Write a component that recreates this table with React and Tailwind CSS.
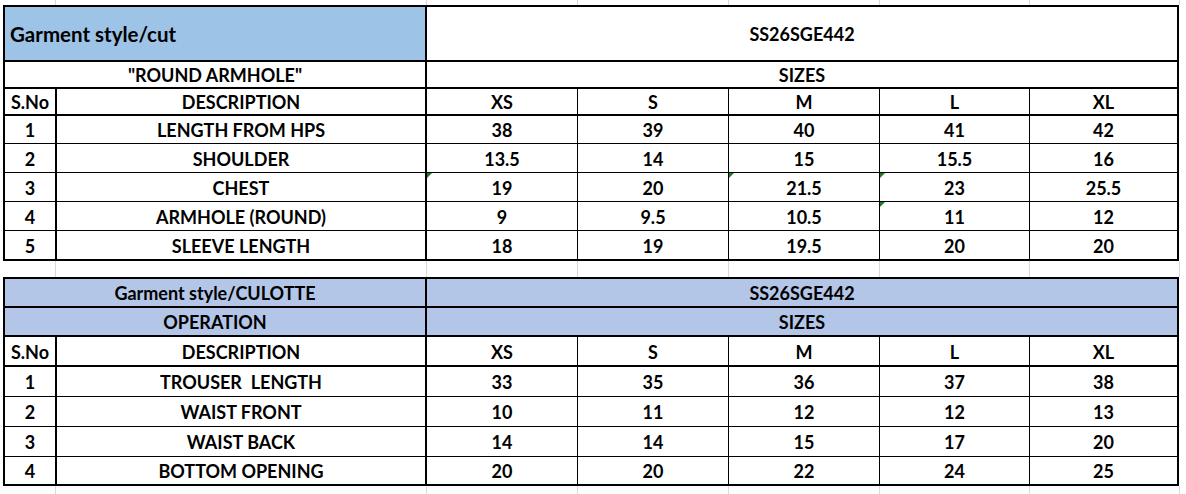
import React from 'react'

const widths = ['w-[52px]', 'w-[370px]', 'w-[152px]', 'w-[151px]', 'w-[151px]', 'w-[150px]', 'w-[150px]']

const sizes = ['XS', 'S', 'M', 'L', 'XL']

const bodice = [
  ['1', 'LENGTH FROM HPS', ['38', '39', '40', '41', '42']],
  ['2', 'SHOULDER', ['13.5', '14', '15', '15.5', '16']],
  ['3', 'CHEST', ['19', '20', '21.5', '23', '25.5'], [0, 2, 3]],
  ['4', 'ARMHOLE (ROUND)', ['9', '9.5', '10.5', '11', '12'], [3]],
  ['5', 'SLEEVE LENGTH', ['18', '19', '19.5', '20', '20']],
]

const culotte = [
  ['1', 'TROUSER  LENGTH', ['33', '35', '36', '37', '38']],
  ['2', 'WAIST FRONT', ['10', '11', '12', '12', '13']],
  ['3', 'WAIST BACK', ['14', '14', '15', '17', '20']],
  ['4', 'BOTTOM OPENING', ['20', '20', '22', '24', '25']],
]

function Flag() {
  return (
    <span className="absolute left-0 top-0 w-0 h-0 border-t-[5px] border-r-[5px] border-t-[#1e7b1e] border-r-transparent" />
  )
}

function Cell({ w, className = '', children, flag }) {
  return (
    <div className={`relative flex items-center justify-center pt-[2px] border-black ${w} ${className}`}>
      {flag && <Flag />}
      <span className="whitespace-pre">{children}</span>
    </div>
  )
}

// data cell borders: left border 2px for the first three columns, 1px after
const leftB = ['border-l-2', 'border-l-2', 'border-l-2', 'border-l', 'border-l', 'border-l', 'border-l']

function DataRow({ row, h, top, last }) {
  const [no, desc, vals, flags = []] = row
  const rowCls = `${top} ${last ? 'border-b-2' : ''}`
  return (
    <div className={`flex ${h}`}>
      <Cell w={widths[0]} className={`${leftB[0]} ${rowCls}`}>{no}</Cell>
      <Cell w={widths[1]} className={`${leftB[1]} ${rowCls}`}>{desc}</Cell>
      {vals.map((v, i) => (
        <Cell
          key={i}
          w={widths[i + 2]}
          flag={flags.includes(i)}
          className={`${leftB[i + 2]} ${rowCls} ${i === 4 ? 'border-r-2' : ''}`}
        >
          {v}
        </Cell>
      ))}
    </div>
  )
}

function SizeHead({ h }) {
  return (
    <div className={`flex ${h}`}>
      <Cell w={widths[0]} className="border-l-2 border-t-2">S.No</Cell>
      <Cell w={widths[1]} className="border-l-2 border-t-2">DESCRIPTION</Cell>
      {sizes.map((s, i) => (
        <Cell key={s} w={widths[i + 2]} className={`${leftB[i + 2]} border-t-2 ${i === 4 ? 'border-r-2' : ''}`}>
          {s}
        </Cell>
      ))}
    </div>
  )
}

function GridStrip({ h }) {
  const g = ['w-[56px]', 'w-[371px]', 'w-[151px]', 'w-[151px]', 'w-[151px]', 'w-[150px]', 'w-[150px]']
  return (
    <div className={`flex ${h}`}>
      {g.map((w, i) => (
        <div key={i} className={`${w} border-r border-[#d9d9d9]`} />
      ))}
    </div>
  )
}

export default function App() {
  return (
    <div
      className="w-[1186px] h-[494px] bg-white text-black font-bold text-[18px] overflow-hidden"
      style={{ fontFamily: 'Lato, "Open Sans", sans-serif' }}
    >
      <GridStrip h="h-[5px]" />

      <div className="pl-[3px]">
        {/* first sheet: bodice */}
        <div className="flex h-[55px]">
          <div className="w-[422px] border-l-2 border-t-2 border-black bg-[#9dc3e6] flex items-center pl-[5px] pt-[2px] text-[20.5px]">
            Garment style/cut
          </div>
          <div className="w-[754px] border-l-2 border-t-2 border-r-2 border-black flex items-center justify-center pt-[2px]">
            SS26SGE442
          </div>
        </div>
        <div className="flex h-[27px]">
          <div className="w-[422px] border-l-2 border-t-2 border-black flex items-center justify-center pt-[2px]">
            "ROUND ARMHOLE"
          </div>
          <div className="w-[754px] border-l-2 border-t-2 border-r-2 border-black flex items-center justify-center pt-[2px]">
            SIZES
          </div>
        </div>
        <SizeHead h="h-[27px]" />
        {bodice.map((r, i) => (
          <DataRow
            key={r[0]}
            row={r}
            h={i === 4 ? 'h-[31px]' : 'h-[29px]'}
            top={i === 0 ? 'border-t-2' : 'border-t'}
            last={i === 4}
          />
        ))}
      </div>

      <GridStrip h="h-[16px]" />

      <div className="pl-[3px]">
        {/* second sheet: culotte */}
        <div className="flex h-[29px]">
          <div className="w-[422px] bg-[#b4c6e7] border-l-2 border-t-2 border-black flex items-center justify-center pt-[2px]">
            Garment style/CULOTTE
          </div>
          <div className="w-[754px] bg-[#b4c6e7] border-l-2 border-t-2 border-r-2 border-black flex items-center justify-center pt-[2px]">
            SS26SGE442
          </div>
        </div>
        <div className="flex h-[29px]">
          <div className="w-[422px] bg-[#b4c6e7] border-l-2 border-t-2 border-black flex items-center justify-center pt-[2px]">
            OPERATION
          </div>
          <div className="w-[754px] bg-[#b4c6e7] border-l-2 border-t-2 border-r-2 border-black flex items-center justify-center pt-[2px]">
            SIZES
          </div>
        </div>
        <SizeHead h="h-[30px]" />
        {culotte.map((r, i) => (
          <DataRow
            key={r[0]}
            row={r}
            h={i === 0 ? 'h-[31px]' : 'h-[30px]'}
            top={i === 0 ? 'border-t-2' : 'border-t'}
            last={i === 3}
          />
        ))}
      </div>

      <GridStrip h="h-[10px]" />
    </div>
  )
}
